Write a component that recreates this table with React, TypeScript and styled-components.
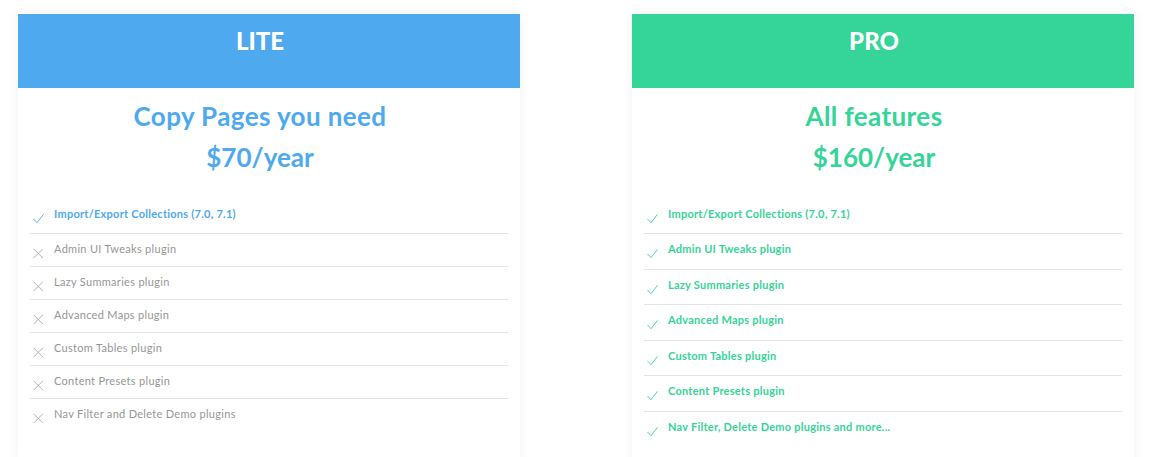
import React from "react";
import styled, { createGlobalStyle } from "styled-components";

const GlobalStyle = createGlobalStyle`
  html, body {
    margin: 0;
    padding: 0;
    background: #ffffff;
    font-family: "Lato", "Liberation Sans", sans-serif;
  }
`;

const Page = styled.div`
  display: flex;
  align-items: flex-start;
  gap: 112px;
  padding: 14px 18px 0;
`;

const Card = styled.section`
  width: 502px;
  background: #ffffff;
  box-shadow: 0 0 12px rgba(0, 0, 0, 0.06);
  padding-bottom: 30px;
`;

const Header = styled.div<{ $color: string }>`
  height: 74px;
  box-sizing: border-box;
  padding: 12px 18px 0 0;
  background: ${(p) => p.$color};
  color: #ffffff;
  text-align: center;
  font-size: 24px;
  line-height: 30px;
  font-weight: 900;
`;

const Title = styled.h2<{ $color: string }>`
  margin: 10px 0 0;
  padding-right: 18px;
  text-align: center;
  color: ${(p) => p.$color};
  font-size: 26px;
  line-height: 36px;
  font-weight: 700;
  letter-spacing: 0.4px;
`;

const Price = styled.div<{ $color: string }>`
  margin-top: 5px;
  padding-right: 18px;
  text-align: center;
  color: ${(p) => p.$color};
  font-size: 26px;
  line-height: 36px;
  font-weight: 700;
`;

const List = styled.ul`
  list-style: none;
  margin: 24px 12px 0;
  padding: 0;
`;

const Item = styled.li<{ $top: number; $bottom: number }>`
  display: flex;
  align-items: flex-start;
  gap: 10px;
  padding: ${(p) => p.$top}px 0 ${(p) => p.$bottom}px 3px;
  border-top: 1px solid #e4e4e4;
  &:first-child {
    border-top: none;
    padding-top: 7.6px;
    padding-bottom: 12.4px;
  }
`;

const IconBox = styled.span`
  display: flex;
  width: 11px;
  height: 10px;
  margin-top: 4px;
  transform: translateY(2.5px);
  flex: none;
`;

const Label = styled.span<{ $color: string; $bold: boolean }>`
  font-size: 11px;
  line-height: 14px;
  color: ${(p) => p.$color};
  font-weight: ${(p) => (p.$bold ? 700 : 400)};
  letter-spacing: ${(p) => (p.$bold ? "0.25px" : "0.3px")};
`;

const Check = ({ color }: { color: string }) => (
  <svg width="11" height="10" viewBox="0 0 11 10">
    <polyline points="0.5,5.5 4,9.2 10.5,0.8" fill="none" stroke={color} strokeWidth="0.9" />
  </svg>
);

const Cross = () => (
  <svg width="11" height="10" viewBox="0 0 11 10">
    <path d="M0.5 0.2 L10 9.7 M10 0.2 L0.5 9.7" fill="none" stroke="#a8a8a8" strokeWidth="0.9" />
  </svg>
);

type Feature = { text: string; on: boolean };

const features = [
  "Admin UI Tweaks plugin",
  "Lazy Summaries plugin",
  "Advanced Maps plugin",
  "Custom Tables plugin",
  "Content Presets plugin",
];

const lite: Feature[] = [
  { text: "Import/Export Collections (7.0, 7.1)", on: true },
  ...features.map((t) => ({ text: t, on: false })),
  { text: "Nav Filter and Delete Demo plugins", on: false },
];

const pro: Feature[] = [
  { text: "Import/Export Collections (7.0, 7.1)", on: true },
  ...features.map((t) => ({ text: t, on: true })),
  { text: "Nav Filter, Delete Demo plugins and more...", on: true },
];

type PlanProps = {
  name: string;
  title: string;
  price: string;
  color: string;
  items: Feature[];
  top: number;
  bottom: number;
};

const Plan = ({ name, title, price, color, items, top, bottom }: PlanProps) => (
  <Card>
    <Header $color={color}>{name}</Header>
    <Title $color={color}>{title}</Title>
    <Price $color={color}>{price}</Price>
    <List>
      {items.map((f) => (
        <Item key={f.text} $top={top} $bottom={bottom}>
          <IconBox>{f.on ? <Check color={color} /> : <Cross />}</IconBox>
          <Label $color={f.on ? color : "#969696"} $bold={f.on}>
            {f.text}
          </Label>
        </Item>
      ))}
    </List>
  </Card>
);

export default function App() {
  return (
    <>
      <GlobalStyle />
      <Page>
        <Plan
          name="LITE"
          title="Copy Pages you need"
          price="$70/year"
          color="#4ea9ee"
          items={lite}
          top={7.6}
          bottom={10.4}
        />
        <Plan
          name="PRO"
          title="All features"
          price="$160/year"
          color="#35d498"
          items={pro}
          top={8.2}
          bottom={12.4}
        />
      </Page>
    </>
  );
}
